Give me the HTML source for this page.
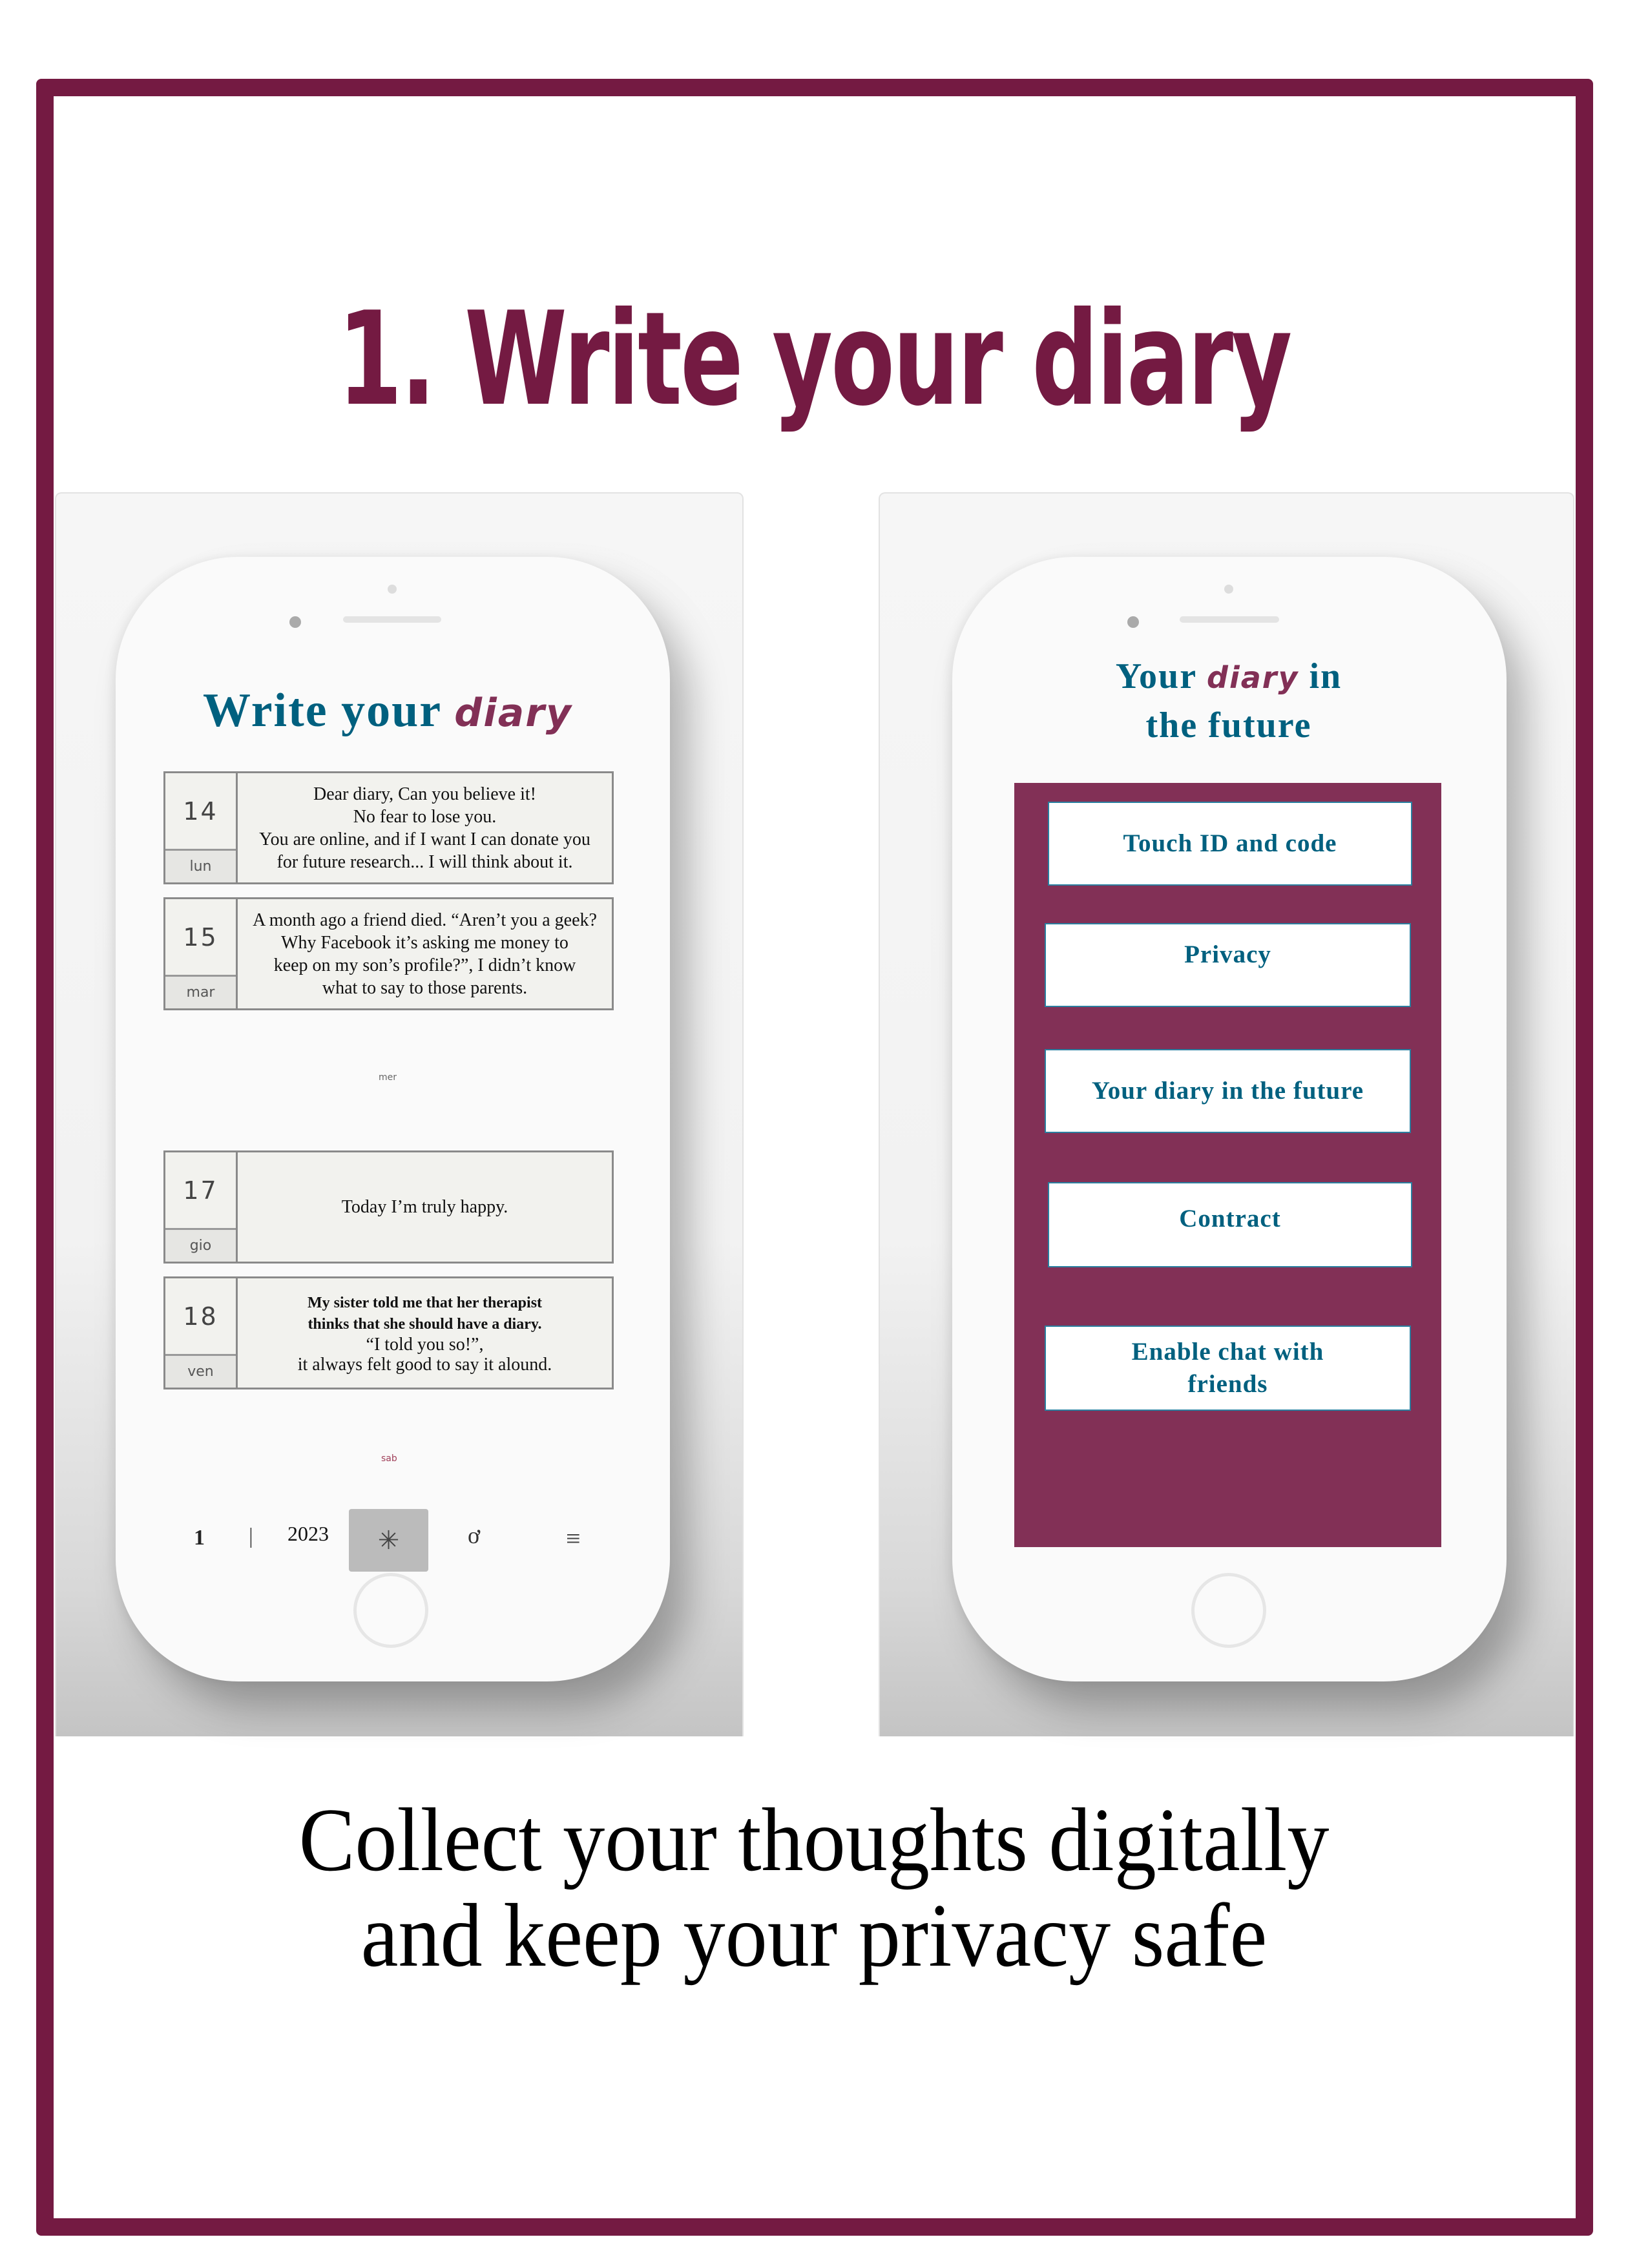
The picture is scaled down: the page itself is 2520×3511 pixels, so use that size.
<!DOCTYPE html>
<html><head><meta charset="utf-8"><style>
*{margin:0;padding:0;box-sizing:border-box}
body{width:2520px;height:3511px;background:#fff;position:relative;overflow:hidden;font-family:"Liberation Serif",serif}
.a{position:absolute}
.frame{left:56px;top:122px;width:2410px;height:3339px;border:27px solid #741a42;border-radius:8px}
.panel{top:762px;height:1926px;background:linear-gradient(180deg,#f6f6f6 0%,#f2f2f2 60%,#d8d8d8 88%,#c4c4c4 100%);border:2px solid #e2e2e2;border-bottom:none;border-radius:10px 10px 0 0}
.phone{top:862px;height:1741px;width:858px;background:#fafafa;border-radius:190px;box-shadow:30px 40px 60px rgba(0,0,0,.28),-6px 0 14px rgba(0,0,0,.06)}
.dot{width:18px;height:18px;border-radius:50%;background:#aaa}
.sdot{width:14px;height:14px;border-radius:50%;background:#ddd}
.spk{height:10px;border-radius:5px;background:#e4e4e4}
.home{width:116px;height:116px;border-radius:50%;border:5px solid #e6e6e6}
.teal{color:#00607f;font-weight:bold}
.hand{font-family:"DejaVu Sans",sans-serif;color:#823056;font-style:italic;font-weight:bold}
.entry{left:253px;width:697px;background:#f2f2ee;border:3px solid #8a8a8a;display:flex}
.dc{width:112px;border-right:3px solid #8a8a8a;display:flex;flex-direction:column}
.dn{flex:1;display:flex;align-items:center;justify-content:center;font-family:"DejaVu Sans",sans-serif;font-size:38px;color:#444;letter-spacing:3px}
.dl{height:52px;border-top:3px solid #999;background:#e6e6e3;font-family:"DejaVu Sans",sans-serif;font-size:22px;color:#555;text-align:center;line-height:50px}
.tx{flex:1;display:flex;align-items:center;justify-content:center;text-align:center;font-size:28px;line-height:35px;color:#111}
.btn{background:#fff;border:2px solid #2a7fa0;display:flex;align-items:center;justify-content:center;text-align:center;font-size:39px;line-height:50px;color:#00607f;font-weight:bold;letter-spacing:1px}
</style></head><body>
<div class="a frame"></div>
<div class="a" style="left:0;width:2520px;top:440px;text-align:center;font-family:'DejaVu Sans',sans-serif;font-weight:bold;font-size:200px;color:#741a42;letter-spacing:-4px;transform:scaleX(0.72)">1. Write your diary</div>

<div class="a panel" style="left:85px;width:1066px"></div>
<div class="a panel" style="left:1360px;width:1077px"></div>

<div class="a phone" style="left:179px"></div>
<div class="a phone" style="left:1474px"></div>

<div class="a sdot" style="left:600px;top:905px"></div>
<div class="a dot" style="left:448px;top:954px"></div>
<div class="a spk" style="left:531px;top:954px;width:152px"></div>
<div class="a teal" style="left:250px;width:700px;top:1055px;text-align:center;font-size:74px;line-height:90px;letter-spacing:2px">Write your <span class="hand" style="font-size:60px">diary</span></div>

<div class="a entry" style="top:1194px;height:175px"><div class="dc"><div class="dn">14</div><div class="dl">lun</div></div><div class="tx">Dear diary, Can you believe it!<br>No fear to lose you.<br>You are online, and if I want I can donate you<br>for future research... I will think about it.</div></div>
<div class="a entry" style="top:1389px;height:175px"><div class="dc"><div class="dn">15</div><div class="dl">mar</div></div><div class="tx">A month ago a friend died. “Aren’t you a geek?<br>Why Facebook it’s asking me money to<br>keep on my son’s profile?”, I didn’t know<br>what to say to those parents.</div></div>
<div class="a" style="left:586px;top:1660px;font-family:'DejaVu Sans',sans-serif;font-size:14px;color:#666">mer</div>
<div class="a entry" style="top:1781px;height:175px"><div class="dc"><div class="dn">17</div><div class="dl">gio</div></div><div class="tx">Today I’m truly happy.</div></div>
<div class="a entry" style="top:1976px;height:175px"><div class="dc"><div class="dn">18</div><div class="dl">ven</div></div><div class="tx" style="line-height:31px"><span><b style="font-size:24px">My sister told me that her therapist<br>thinks that she should have a diary.</b><br>“I told you so!”,<br>it always felt good to say it alound.</span></div></div>
<div class="a" style="left:590px;top:2250px;font-family:'DejaVu Sans',sans-serif;font-size:14px;color:#a0405a">sab</div>

<div class="a" style="left:300px;top:2362px;font-size:34px;font-weight:bold;color:#222">1</div>
<div class="a" style="left:385px;top:2360px;font-size:34px;color:#444">|</div>
<div class="a" style="left:445px;top:2356px;font-size:32px;color:#111">2023</div>
<div class="a" style="left:540px;top:2336px;width:123px;height:97px;background:#bbb;border-radius:4px;display:flex;align-items:center;justify-content:center;font-size:40px;color:#444">✳</div>
<div class="a" style="left:724px;top:2356px;font-size:36px;color:#333">ơ</div>
<div class="a" style="left:876px;top:2358px;font-size:40px;color:#444">≡</div>
<div class="a home" style="left:547px;top:2435px"></div>

<div class="a sdot" style="left:1895px;top:905px"></div>
<div class="a dot" style="left:1745px;top:954px"></div>
<div class="a spk" style="left:1826px;top:954px;width:154px"></div>
<div class="a teal" style="left:1570px;width:664px;top:1010px;text-align:center;font-size:56px;line-height:74px;letter-spacing:2px">Your <span class="hand" style="font-size:46px">diary</span> in<br>the future</div>
<div class="a" style="left:1570px;top:1212px;width:661px;height:1183px;background:#823056"></div>
<div class="a btn" style="left:1622px;top:1241px;width:564px;height:130px">Touch ID and code</div>
<div class="a btn" style="left:1617px;top:1429px;width:567px;height:130px;align-items:flex-start;padding-top:22px">Privacy</div>
<div class="a btn" style="left:1617px;top:1624px;width:567px;height:130px">Your diary in the future</div>
<div class="a btn" style="left:1622px;top:1830px;width:564px;height:132px;align-items:flex-start;padding-top:30px">Contract</div>
<div class="a btn" style="left:1617px;top:2052px;width:567px;height:132px">Enable chat with<br>friends</div>
<div class="a home" style="left:1844px;top:2435px"></div>

<div class="a" style="left:0;width:2520px;top:2775px;text-align:center;font-size:140px;line-height:148px;color:#000;transform:scaleX(0.93)">Collect your thoughts digitally<br>and keep your privacy safe</div>
</body></html>
